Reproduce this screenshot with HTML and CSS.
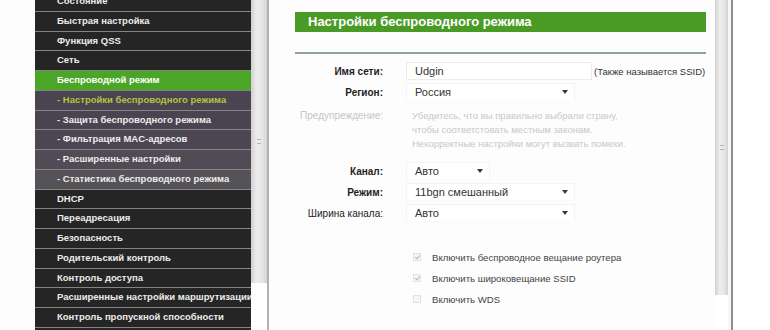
FILE: index.html
```html
<!DOCTYPE html>
<html lang="ru">
<head>
<meta charset="utf-8">
<title>Настройки беспроводного режима</title>
<link rel="stylesheet" href="styles.css">
</head>
<body>
<div class="screen">
  <div class="gutter"></div>
  <nav class="menu">
    <div class="item">Состояние</div>
    <div class="item">Быстрая настройка</div>
    <div class="item">Функция QSS</div>
    <div class="item">Сеть</div>
    <div class="item active">Беспроводной режим</div>
    <div class="item sub current">- Настройки беспроводного режима</div>
    <div class="item sub s2">- Защита беспроводного режима</div>
    <div class="item sub s3">- Фильтрация MAC-адресов</div>
    <div class="item sub s4">- Расширенные настройки</div>
    <div class="item sub s5">- Статистика беспроводного режима</div>
    <div class="item">DHCP</div>
    <div class="item">Переадресация</div>
    <div class="item">Безопасность</div>
    <div class="item">Родительский контроль</div>
    <div class="item">Контроль доступа</div>
    <div class="item">Расширенные настройки маршрутизации</div>
    <div class="item">Контроль пропускной способности</div>
    <div class="item"></div>
  </nav>
  <div class="vscroll vscroll-left"><span class="grip"></span></div>
  <div class="divider"></div>
  <main class="content">
    <h1 class="title">Настройки беспроводного режима</h1>
    <div class="rule"></div>

    <div class="row r-first">
      <div class="label strong">Имя сети:</div>
      <div class="value">
        <div class="field text-input">Udgin</div>
        <span class="hint">(Также называется SSID)</span>
      </div>
    </div>
    <div class="row r-next">
      <div class="label strong">Регион:</div>
      <div class="value">
        <div class="field select wide">Россия<span class="arrow"></span></div>
      </div>
    </div>
    <div class="row warn">
      <div class="label muted">Предупреждение:</div>
      <div class="value warn-text">Убедитесь, что вы правильно выбрали страну,<br>чтобы соответстовать местным законам.<br>Некорректные настройки могут вызвать помехи.</div>
    </div>
    <div class="row r-channel">
      <div class="label strong">Канал:</div>
      <div class="value">
        <div class="field select narrow">Авто<span class="arrow"></span></div>
      </div>
    </div>
    <div class="row r-next">
      <div class="label strong">Режим:</div>
      <div class="value">
        <div class="field select wide">11bgn смешанный<span class="arrow"></span></div>
      </div>
    </div>
    <div class="row r-next">
      <div class="label">Ширина канала:</div>
      <div class="value">
        <div class="field select wide">Авто<span class="arrow"></span></div>
      </div>
    </div>

    <div class="row check r-checks">
      <div class="label"></div>
      <div class="value"><span class="box checked"></span><span class="check-label">Включить беспроводное вещание роутера</span></div>
    </div>
    <div class="row check r-next">
      <div class="label"></div>
      <div class="value"><span class="box checked"></span><span class="check-label">Включить широковещание SSID</span></div>
    </div>
    <div class="row check r-next">
      <div class="label"></div>
      <div class="value"><span class="box"></span><span class="check-label">Включить WDS</span></div>
    </div>
  </main>
  <div class="vscroll vscroll-right"><span class="grip"></span></div>
  <div class="gap"></div>
  <div class="divider dark"></div>
  <div class="rest"></div>
</div>
</body>
</html>
```
FILE: styles.css
```css
* { box-sizing: border-box; margin: 0; padding: 0; }

html, body {
  width: 770px;
  height: 330px;
  overflow: hidden;
  background: #ffffff;
}

body {
  font-family: "Liberation Sans", Arial, sans-serif;
  color: #222;
}

.screen {
  display: flex;
  width: 770px;
  height: 330px;
  overflow: hidden;
}

.gutter {
  width: 35px;
  flex: none;
  background: #fdfdfd;
}

/* ---------- left menu ---------- */
.menu {
  width: 216px;
  flex: none;
  margin-top: -8px;
  display: flex;
  flex-direction: column;
  background: #262626;
}

.item {
  height: 19.75px;
  flex: none;
  border-bottom: 1px solid #858585;
  background: #252525;
  color: #ececec;
  font-size: 9.5px;
  font-weight: bold;
  line-height: 18.75px;
  padding-left: 22px;
  white-space: nowrap;
  overflow: hidden;
}

.item.active {
  background: #4ba526;
  color: #ffffff;
}

.item.sub { background: #4a4350; }
.item.sub.current { color: #b0c644; }
.item.s3 { background: #4c4653; }
.item.s4 { background: #504b55; }
.item.s5 { background: #555357; }

/* ---------- scrollbars ---------- */
.vscroll {
  flex: none;
  display: flex;
  align-items: center;
  justify-content: center;
  background: linear-gradient(to right, #d0d0d0 0%, #ededed 35%, #e6e6e6 70%, #d2d2d2 100%);
}

.vscroll-left {
  width: 16px;
  height: 283px;
}

.vscroll-right {
  width: 13px;
  height: 295px;
}

.grip {
  width: 4px;
  height: 5px;
  border-top: 1px solid #b5b5b5;
  border-bottom: 1px solid #b5b5b5;
}

.divider {
  width: 2px;
  flex: none;
  background: #b0b0b0;
}

.divider.dark { background: #8e8e8e; }

.gap {
  width: 3px;
  flex: none;
  background: #f7f7f7;
}

.rest {
  flex: 1;
  background: #ffffff;
}

/* ---------- content ---------- */
.content {
  width: 446px;
  flex: none;
  background: #fdfdfd;
  padding-top: 12px;
  display: flex;
  flex-direction: column;
}

.title {
  margin-left: 26px;
  width: 411px;
  height: 20px;
  background: #4a9b26;
  color: #ffffff;
  font-size: 13px;
  font-weight: bold;
  line-height: 20px;
  padding-left: 13px;
}

.rule {
  margin-left: 26px;
  width: 411px;
  height: 2px;
  margin-top: 20px;
  background: #8aa596;
}

.row {
  display: flex;
  align-items: center;
  height: 18px;
  font-size: 10px;
}

.r-first { margin-top: 8px; }
.r-next { margin-top: 3px; }
.r-channel { margin-top: 11px; }
.r-checks { margin-top: 26px; }

.label {
  width: 114px;
  flex: none;
  text-align: right;
  color: #222;
}

.label.strong { font-weight: bold; color: #1e1e1e; }
.label.muted { color: #c6c6c6; }

.value {
  margin-left: 23px;
  display: flex;
  align-items: center;
  height: 100%;
}

.field {
  height: 18px;
  display: flex;
  align-items: center;
  padding-left: 8px;
  font-size: 11px;
  color: #333;
  background: #ffffff;
  border: 1px solid #ececec;
}

.text-input {
  width: 186px;
}

.select {
  justify-content: space-between;
  padding-right: 6px;
  border-color: #f3f3f3;
  border-bottom-color: #fafafa;
}

.select.wide { width: 169px; }
.select.narrow { width: 84px; }

.arrow {
  width: 0;
  height: 0;
  border-left: 3px solid transparent;
  border-right: 3px solid transparent;
  border-top: 4px solid #3a3a3a;
}

.hint {
  margin-left: 2px;
  font-size: 9.5px;
  color: #333;
  white-space: nowrap;
}

.warn {
  margin-top: 8px;
  height: 42px;
  align-items: flex-start;
}

.warn .label { line-height: 14px; }

.warn-text {
  display: block;
  margin-left: 29px;
  font-size: 9.5px;
  line-height: 14px;
  color: #c8c8c8;
  white-space: nowrap;
}

.check .value { margin-left: 30px; }

.box {
  width: 8px;
  height: 8px;
  flex: none;
  border: 1px solid #e2e2e2;
  background: #f6f6f6;
  position: relative;
}

.box.checked::after {
  content: "";
  position: absolute;
  left: 2px;
  top: 0px;
  width: 2px;
  height: 4px;
  border-right: 1px solid #b8b8b8;
  border-bottom: 1px solid #b8b8b8;
  transform: rotate(40deg);
}

.check-label {
  margin-left: 11px;
  font-size: 9.6px;
  color: #444;
  white-space: nowrap;
}
```
